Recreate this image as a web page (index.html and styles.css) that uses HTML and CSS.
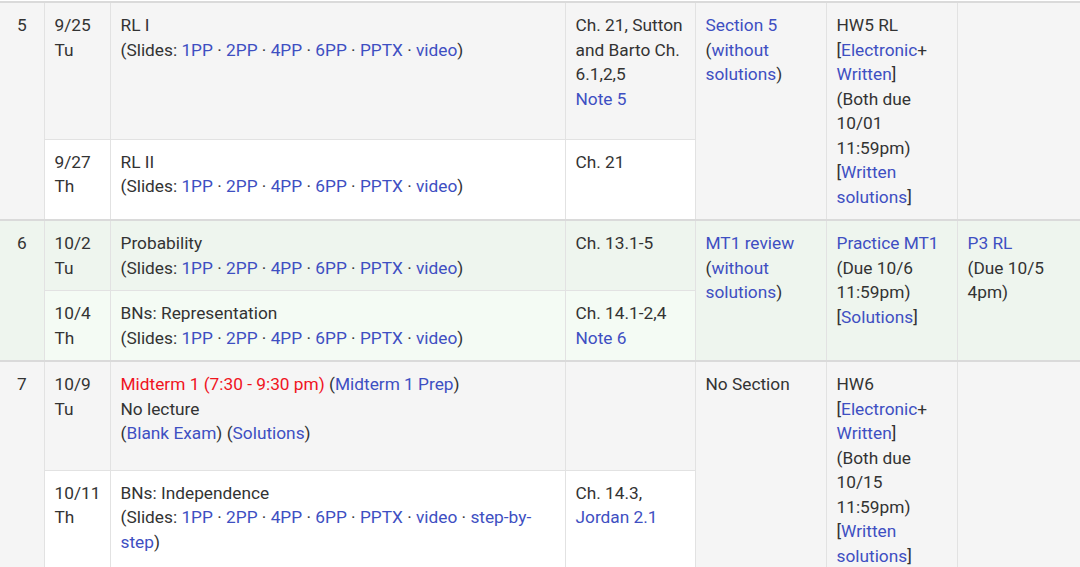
FILE: index.html
```html
<!DOCTYPE html>
<html>
<head>
<meta charset="utf-8">
<link rel="stylesheet" href="styles.css">
</head>
<body>
<table class="sched">
  <colgroup>
    <col class="c-wk"><col class="c-date"><col class="c-lec"><col class="c-read"><col class="c-sec"><col class="c-hw"><col class="c-proj">
  </colgroup>
  <tbody class="week gray">
    <tr class="r1">
      <td class="wk" rowspan="2">5</td>
      <td>9/25<br>Tu</td>
      <td>RL I<br>(Slides: <a>1PP</a> · <a>2PP</a> · <a>4PP</a> · <a>6PP</a> · <a>PPTX</a> · <a>video</a>)</td>
      <td>Ch. 21, Sutton and Barto Ch. 6.1,2,5<br><a>Note 5</a></td>
      <td rowspan="2"><a>Section 5</a><br>(<a>without solutions</a>)</td>
      <td rowspan="2">HW5 RL<br>[<a>Electronic</a>+ <a>Written</a>]<br>(Both due 10/01 11:59pm)<br>[<a>Written solutions</a>]</td>
      <td class="proj" rowspan="2"></td>
    </tr>
    <tr class="r2">
      <td>9/27<br>Th</td>
      <td>RL II<br>(Slides: <a>1PP</a> · <a>2PP</a> · <a>4PP</a> · <a>6PP</a> · <a>PPTX</a> · <a>video</a>)</td>
      <td>Ch. 21</td>
    </tr>
  </tbody>
  <tbody class="week green">
    <tr class="r1">
      <td class="wk" rowspan="2">6</td>
      <td>10/2<br>Tu</td>
      <td>Probability<br>(Slides: <a>1PP</a> · <a>2PP</a> · <a>4PP</a> · <a>6PP</a> · <a>PPTX</a> · <a>video</a>)</td>
      <td>Ch. 13.1-5</td>
      <td rowspan="2"><a>MT1 review</a><br>(<a>without solutions</a>)</td>
      <td rowspan="2"><a>Practice MT1</a><br>(Due 10/6 11:59pm)<br>[<a>Solutions</a>]</td>
      <td class="proj" rowspan="2"><a>P3 RL</a><br>(Due 10/5 4pm)</td>
    </tr>
    <tr class="r2">
      <td>10/4<br>Th</td>
      <td>BNs: Representation<br>(Slides: <a>1PP</a> · <a>2PP</a> · <a>4PP</a> · <a>6PP</a> · <a>PPTX</a> · <a>video</a>)</td>
      <td>Ch. 14.1-2,4<br><a>Note 6</a></td>
    </tr>
  </tbody>
  <tbody class="week gray">
    <tr class="r1">
      <td class="wk" rowspan="2">7</td>
      <td>10/9<br>Tu</td>
      <td><span class="red">Midterm 1 (7:30 - 9:30 pm)</span> (<a>Midterm 1 Prep</a>)<br>No lecture<br>(<a>Blank Exam</a>) (<a>Solutions</a>)</td>
      <td></td>
      <td rowspan="2">No Section</td>
      <td rowspan="2">HW6<br>[<a>Electronic</a>+ <a>Written</a>]<br>(Both due 10/15 11:59pm)<br>[<a>Written solutions</a>]</td>
      <td class="proj" rowspan="2"></td>
    </tr>
    <tr class="r2">
      <td>10/11<br>Th</td>
      <td>BNs: Independence<br>(Slides: <a>1PP</a> · <a>2PP</a> · <a>4PP</a> · <a>6PP</a> · <a>PPTX</a> · <a>video</a> · <a>step-by-step</a>)</td>
      <td>Ch. 14.3, <a>Jordan 2.1</a></td>
    </tr>
  </tbody>
</table>
</body>
</html>
```

FILE: styles.css
```css
html, body {
  margin: 0;
  padding: 0;
  background: #fff;
  overflow: hidden;
}
.sched {
  border-collapse: collapse;
  table-layout: fixed;
  width: 1080px;
  margin-top: 1px;
  font-family: Roboto, "Liberation Sans", sans-serif;
  font-size: 17.3px;
  line-height: 24.5px;
  color: #333;
}
.c-wk { width: 44px; }
.c-date { width: 66px; }
.c-lec { width: 455px; }
.c-read { width: 130px; }
.c-sec { width: 131px; }
.c-hw { width: 131px; }
.c-proj { width: 123px; }
.sched td {
  vertical-align: top;
  padding: 10px 10px;
  border: 1px solid #e2e2e2;
}
.sched td:first-child {
  border-left: none;
}
.sched td.proj {
  border-right: none;
}
.sched td.wk {
  text-align: center;
  padding-left: 0;
  padding-right: 0;
}
.week {
  border-top: 2px solid #dadada;
}
.gray .r1 td, .gray td.wk { background: #f5f5f5; }
.gray .r2 td { background: #fff; }
.green .r1 td, .green td.wk { background: #eef5ee; }
.green .r2 td { background: #f4fbf4; }
.sched a {
  color: #3e4fc2;
  text-decoration: none;
}
.red { color: #f0141e; }
```
